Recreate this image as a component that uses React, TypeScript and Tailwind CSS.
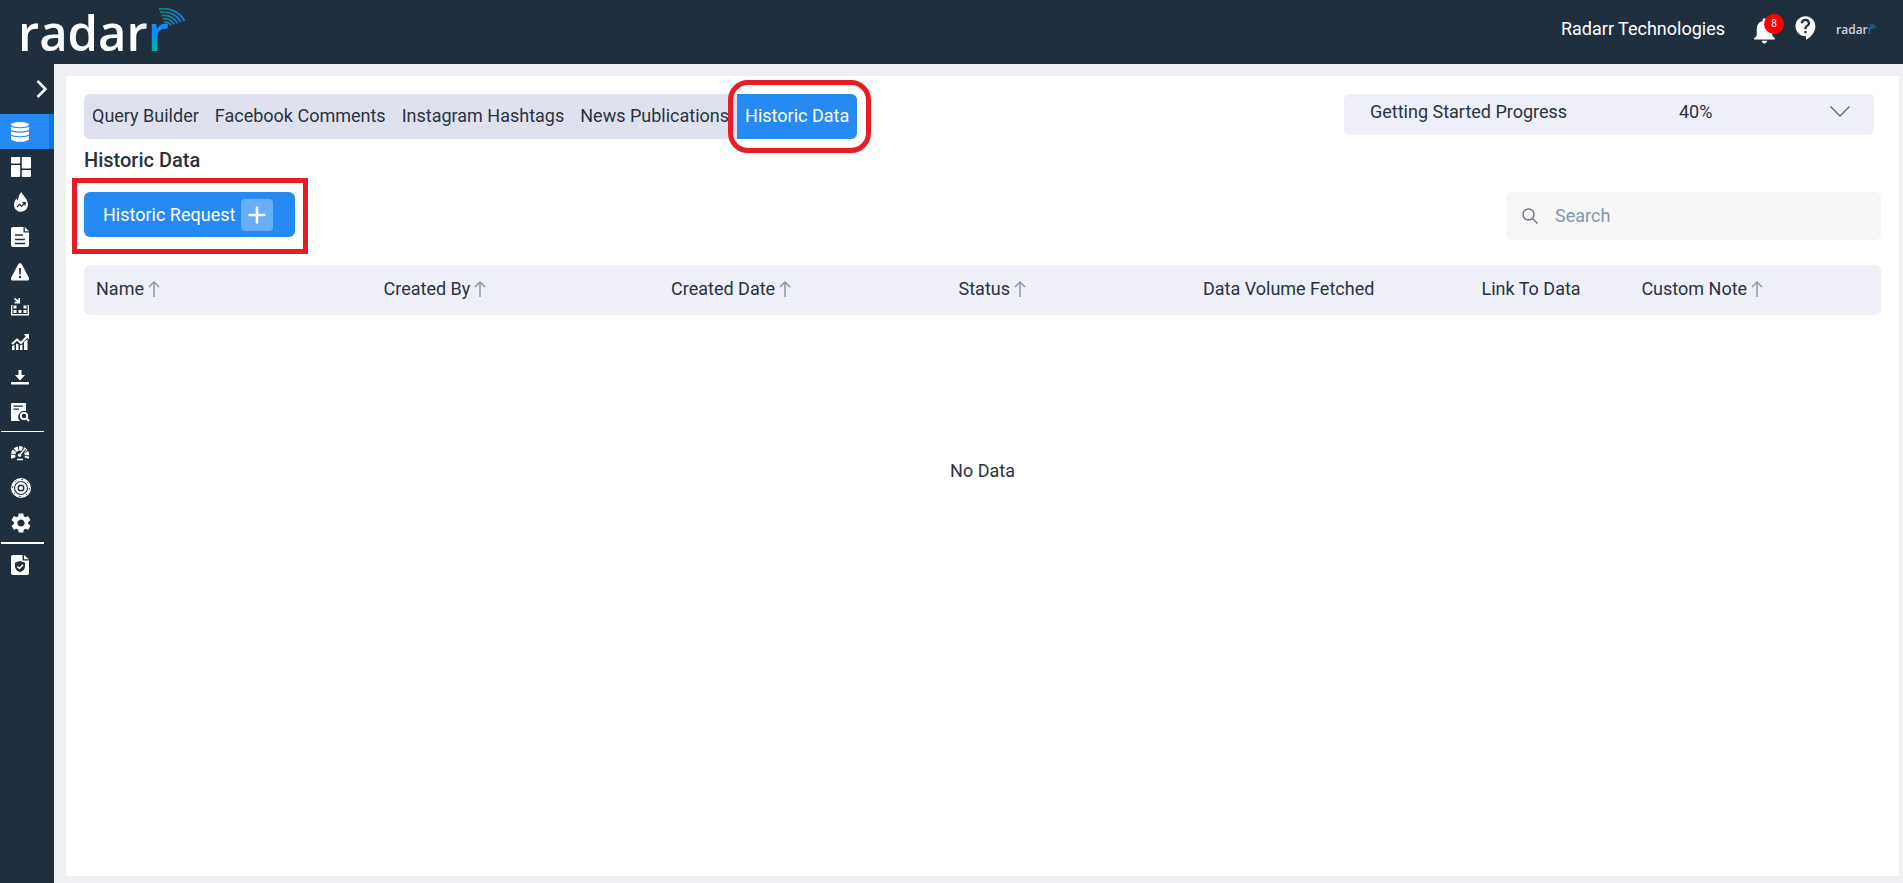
import { useId, useState } from "react";
import { MdContactSupport, MdNotifications, MdSettings } from "react-icons/md";

const tabs = [
    "Query Builder",
    "Facebook Comments",
    "Instagram Hashtags",
    "News Publications",
    "Historic Data",
];

const columns = [
    { title: "Name", sortable: true, width: "w-[16%]" },
    { title: "Created By", sortable: true, width: "w-[16%]" },
    { title: "Created Date", sortable: true, width: "w-[16%]" },
    { title: "Status", sortable: true, width: "w-[13.6%]" },
    { title: "Data Volume Fetched", sortable: false, width: "w-[15.5%]" },
    { title: "Link To Data", sortable: false, width: "w-[8.9%]" },
    { title: "Custom Note", sortable: true, width: "w-[14%]" },
];

function DatabaseIcon() {
    return (
        <svg width="20" height="20" viewBox="0 0 20 20" fill="currentColor">
            <ellipse cx="9" cy="2.6" rx="9" ry="2.6" />
            <path d="M0 4.400c2 2.300 16 2.300 18 0v3.200c-2 2.600-16 2.600-18 0z" />
            <path d="M0 9c2 2.300 16 2.300 18 0v3.200c-2 2.600-16 2.600-18 0z" />
            <path d="M0 13.600c2 2.300 16 2.300 18 0v3.600c-2 3.400-16 3.400-18 0z" />
        </svg>
    );
}

function DashboardIcon() {
    return (
        <svg width="20" height="20" viewBox="0 0 20 20" fill="currentColor">
            <rect x="0" y="0" width="9.2" height="6.6" rx="0.8" />
            <rect x="0" y="8" width="9.2" height="12" rx="0.8" />
            <rect x="10.8" y="0" width="9.2" height="11.6" rx="0.8" />
            <rect x="10.8" y="13" width="9.2" height="7" rx="0.8" />
        </svg>
    );
}

function TrendingIcon() {
    return (
        <svg width="20" height="20" viewBox="0 0 20 20" fill="none">
            <path d="M10.600 0c.6 3 6.400 6.800 6.400 12.600a7 7 0 0 1-14 .4c0-2.800 1.200-5 2.600-6.600.3 1.200.7 1.800 1.400 2C7.400 5 8.300 1.800 10.600 0z" fill="#fff" />
            <path d="M6 15l2.600-2.600 2 1.800 3.400-3.400M11.400 10.600h2.800v2.800" stroke="#202f3e" strokeWidth="1.3" />
        </svg>
    );
}

function DocumentIcon() {
    return (
        <svg width="20" height="20" viewBox="0 0 20 20" fill="none">
            <path d="M2 0h10.500v5.500H18V18a2 2 0 0 1-2 2H2a2 2 0 0 1-2-2V2a2 2 0 0 1 2-2z" fill="#fff" />
            <path d="M13.800 0L18 4.200h-4.200z" fill="#fff" />
            <path d="M4 8h8M4 12.500h10M4 16.500h10" stroke="#202f3e" strokeWidth="1.3" />
        </svg>
    );
}

function WarningIcon() {
    return (
        <svg width="20" height="20" viewBox="0 0 20 20" fill="none">
            <path d="M7.200 2.200a2.100 2.100 0 0 1 3.600 0l7 13.400a2 2 0 0 1-1.800 3H2a2 2 0 0 1-1.800-3z" fill="#fff" />
            <path d="M8 6h2l-.3 6.500H8.300z" fill="#202f3e" />
            <circle cx="9" cy="15" r="1.2" fill="#202f3e" />
        </svg>
    );
}

function CompetitorIcon() {
    return (
        <svg width="20" height="20" viewBox="0 0 20 20" fill="none">
            <path d="M3.500 1.500l4 3.500M8.200 1v4.600H3.600" stroke="#fff" strokeWidth="1.7" />
            <path d="M.7 8v9.800h16.600V8" stroke="#fff" strokeWidth="1.4" />
            <path d="M2.500 8.500h3v3h-3zM12.500 8.500h3v3h-3zM2.500 13h3v3h-3zM7.500 13h3v3h-3zM12.500 13h3v3h-3z" fill="#fff" />
        </svg>
    );
}

function GrowthIcon() {
    return (
        <svg width="20" height="20" viewBox="0 0 20 20" fill="none">
            <path d="M1 12l5-4.500 4 3.500 6.500-7" stroke="#fff" strokeWidth="2" />
            <path d="M12.500 2H18v5.500z" fill="#fff" />
            <path d="M1 14.500l2.500-2V18H1zM5 11.500l2.500 1V18H5zM9 13.500l2.500-1V18H9zM13 10l3.500-3v11H13z" fill="#fff" />
        </svg>
    );
}

function DownloadIcon() {
    return (
        <svg width="20" height="20" viewBox="0 0 20 20" fill="currentColor">
            <path d="M7.500 3h3v5H14l-5 5.500L4 8h3.500z" />
            <rect x="0" y="15" width="18" height="2.4" rx="0.6" />
        </svg>
    );
}

function ReportSearchIcon() {
    return (
        <svg width="20" height="20" viewBox="0 0 20 20" fill="none">
            <path d="M1 1h14v8a6 6 0 0 0-6 10H0V2a1 1 0 0 1 1-1z" fill="#fff" />
            <path d="M2.500 4.200H12M2.500 7.200H8" stroke="#202f3e" strokeWidth="1.3" />
            <circle cx="13" cy="14" r="3.2" stroke="#fff" strokeWidth="1.8" />
            <path d="M15.200 16.200l2.800 2.800" stroke="#fff" strokeWidth="2" />
        </svg>
    );
}

function GaugeIcon() {
    return (
        <svg width="20" height="20" viewBox="0 0 20 20" fill="none">
            <path d="M2.500 15a7 7 0 1 1 13 0" stroke="#fff" strokeWidth="4.5" strokeDasharray="3.3 0.9" />
            <path d="M8 13l6-7" stroke="#202f3e" strokeWidth="3" />
            <path d="M8.500 12.500l5.500-7" stroke="#fff" strokeWidth="1.3" />
            <circle cx="8.6" cy="12.2" r="1.7" fill="#fff" />
            <path d="M6 16.500h6" stroke="#fff" strokeWidth="1.5" />
        </svg>
    );
}

function TargetIcon() {
    return (
        <svg width="20" height="20" viewBox="0 0 20 20" fill="none" stroke="#fff">
            <circle cx="10" cy="10" r="8.5" strokeWidth="3" />
            <circle cx="10" cy="10" r="8.5" stroke="#202f3e" strokeWidth="1" strokeDasharray="1.6 5.07" />
            <circle cx="10" cy="10" r="4.7" strokeWidth="2.4" />
            <circle cx="10" cy="10" r="2" fill="#fff" stroke="none" />
        </svg>
    );
}

function PolicyIcon() {
    return (
        <svg width="20" height="20" viewBox="0 0 20 20" fill="none">
            <path d="M2 0h9.500v5.500H18V18a2 2 0 0 1-2 2H2a2 2 0 0 1-2-2V2a2 2 0 0 1 2-2z" fill="#fff" />
            <path d="M13 0l5 4.200h-5z" fill="#fff" />
            <path d="M9 6l5 1.800v3.700c0 2.600-2 4.700-5 5.800-3-1.100-5-3.200-5-5.800V7.800z" fill="#202f3e" />
            <path d="M6.400 11.500l2 2 3.600-3.800" stroke="#fff" strokeWidth="1.5" />
        </svg>
    );
}

const menuGroups = [
    {
        divider: "",
        items: [
            { label: "Data Sources", icon: <DatabaseIcon /> },
            { label: "Dashboards", icon: <DashboardIcon /> },
            { label: "Trending", icon: <TrendingIcon /> },
            { label: "Posts", icon: <DocumentIcon /> },
            { label: "Alerts", icon: <WarningIcon /> },
            { label: "Competitors", icon: <CompetitorIcon /> },
            { label: "Growth", icon: <GrowthIcon /> },
            { label: "Downloads", icon: <DownloadIcon /> },
            { label: "Reports", icon: <ReportSearchIcon /> },
        ],
    },
    {
        divider: "h-px",
        items: [
            { label: "Usage", icon: <GaugeIcon /> },
            { label: "Goals", icon: <TargetIcon /> },
            { label: "Settings", icon: <MdSettings size={24} className="-m-0.5" /> },
        ],
    },
    {
        divider: "h-0.5",
        items: [{ label: "Privacy", icon: <PolicyIcon /> }],
    },
];

function SortArrow() {
    return (
        <svg width="12" height="16" viewBox="0 0 12 16" fill="none" stroke="#9296a6" strokeWidth="1.5">
            <path d="M6 16V1.500M1 6l5-5 5 5" />
        </svg>
    );
}

function Signal({ className }: { className: string }) {
    const id = useId();

    return (
        <svg viewBox="0 0 28 20" className={className} fill="none" strokeWidth="1.8">
            <defs>
                <linearGradient id={id} x1="0" y1="0" x2="28" y2="10" gradientUnits="userSpaceOnUse">
                    <stop offset="0" stopColor="#17806f" />
                    <stop offset="1" stopColor="#1a7fe0" />
                </linearGradient>
            </defs>
            <g stroke={`url(#${id})`}>
                <path d="M1 1c11-1.500 21 3 25.500 12" />
                <path d="M2 4.200c9-1 17 2.500 21 10" />
                <path d="M3.200 7.400c7-.6 13 2 16.400 8" />
                <path d="M4.600 10.600c5-.4 9 1.600 11.600 5.800" />
                <path d="M6 13.800c3-.2 5.400 1 7 3.400" />
            </g>
        </svg>
    );
}

function Header() {
    return (
        <header className="flex h-16 shrink-0 items-center justify-between bg-[#202f3e] pl-[18px] pr-[30px] text-white">
            <a href="#" className="relative font-['Open_Sans',sans-serif] text-[49px] font-semibold leading-[56px]">
                radar
                <span className="bg-linear-to-b from-[#1389ff] from-50% to-[#0bb5a0] to-80% bg-clip-text text-transparent">r</span>
                <Signal className="absolute left-[140px] top-1 w-7" />
            </a>

            <div className="flex items-center pb-2">
                <span className="pt-0.5 text-lg">Radarr Technologies</span>
                <button className="relative ml-6 mt-1 cursor-pointer" aria-label="Notifications">
                    <MdNotifications size={31} />
                    <span className="absolute -right-1 -top-px flex size-5 items-center justify-center rounded-full bg-[#ff0000] text-[10px]">
                        8
                    </span>
                </button>
                <button className="ml-3 cursor-pointer" aria-label="Help">
                    <MdContactSupport size={28} />
                </button>
                <a href="#" className="relative ml-4 mt-1 font-['Open_Sans',sans-serif] text-xs font-semibold text-gray-300">
                    radar<span className="text-[#1377c0]">r</span>
                    <Signal className="absolute -right-1 top-0.5 w-2" />
                </a>
            </div>
        </header>
    );
}

function Sidebar() {
    return (
        <nav className="w-[54px] shrink-0 bg-[#202f3e] text-white">
            <button className="flex h-[50px] w-full cursor-pointer items-center justify-end pr-[7px]" aria-label="Expand menu">
                <svg width="11" height="18" viewBox="0 0 11 18" fill="none" stroke="currentColor" strokeWidth="2.6">
                    <path d="M1.500 1l8 8-8 8" />
                </svg>
            </button>
            {menuGroups.map((group, g) => (
                <div key={g}>
                    {group.divider && <div className={`mb-[3px] ml-px mr-[10px] mt-0.5 bg-white ${group.divider}`} />}
                    {group.items.map((item, i) => (
                        <a
                            key={item.label}
                            href="#"
                            aria-label={item.label}
                            className={`flex h-[35px] items-center pl-[11px] ${
                                g === 0 && i === 0 ? "border-r-[5px] border-[#0d74e2] bg-[#268af5]" : ""
                            }`}
                        >
                            {item.icon}
                        </a>
                    ))}
                </div>
            ))}
        </nav>
    );
}

export default function App() {
    const [activeTab, setActiveTab] = useState("Historic Data");
    const [search, setSearch] = useState("");

    return (
        <div className="flex min-h-screen flex-col font-['Roboto',sans-serif] text-[#2a3241]">
            <Header />
            <div className="flex flex-1">
                <Sidebar />
                <div className="flex flex-1 bg-[#eef0f4] pb-[7px] pl-3 pr-1 pt-3">
                    <main className="flex-1 bg-white px-[18px] pt-[18px]">
                        {/* Tabs and progress */}
                        <div className="flex items-start justify-between">
                            <div className="flex h-[45px] rounded-md bg-[#dfe2ee]">
                                {tabs.map((tab) => (
                                    <button
                                        key={tab}
                                        onClick={() => setActiveTab(tab)}
                                        className={`relative cursor-pointer px-2 pb-0.5 text-lg ${
                                            tab === activeTab ? "rounded-r-md bg-[#268af5] text-white" : ""
                                        }`}
                                    >
                                        {tab}
                                        {tab === "Historic Data" && (
                                            <span className="pointer-events-none absolute -bottom-3.5 -left-[9px] -right-3.5 -top-3.5 rounded-[20px] border-5 border-[#e71d25]" />
                                        )}
                                    </button>
                                ))}
                            </div>
                            <button className="mr-[7px] flex h-[41px] w-[530px] cursor-pointer items-center rounded-md bg-[#eeeff8] pb-1.5 pl-[26px] pr-6 text-left text-lg">
                                <span className="flex-[309]">Getting Started Progress</span>
                                <span className="flex-[151]">40%</span>
                                <svg width="20" height="11" viewBox="0 0 20 11" fill="none" stroke="#6b7280" strokeWidth="1.5">
                                    <path d="M.5.500l9.500 9.500L19.500.500" />
                                </svg>
                            </button>
                        </div>

                        <h1 className="mb-[11px] text-xl font-medium leading-[42px]">Historic Data</h1>

                        {/* Actions */}
                        <div className="flex items-start justify-between">
                            <button className="relative flex h-[45px] cursor-pointer items-center gap-1.5 rounded-md bg-[#268af5] pl-[19px] pr-[22px] text-lg text-white">
                                Historic Request
                                <span className="flex size-8 items-center justify-center rounded bg-white/30">
                                    <svg width="18" height="18" viewBox="0 0 18 18" stroke="currentColor" strokeWidth="2.6" strokeLinecap="round">
                                        <path d="M9 1.500v15M1.500 9h15" />
                                    </svg>
                                </span>
                                <span className="pointer-events-none absolute -bottom-[17px] -left-3 -right-[13px] -top-3.5 border-5 border-[#e71d25]" />
                            </button>
                            <label className="flex h-12 w-[375px] items-center gap-[17px] rounded-md bg-[#f7f7f7] pl-4">
                                <svg width="16" height="16" viewBox="0 0 16 16" fill="none" stroke="#6b7280" strokeWidth="1.4">
                                    <circle cx="6.5" cy="6.5" r="5.5" />
                                    <path d="M10.500 10.500l5 5" />
                                </svg>
                                <input
                                    type="text"
                                    aria-label="Search"
                                    placeholder="Search"
                                    value={search}
                                    onChange={(e) => setSearch(e.target.value)}
                                    className="min-w-0 flex-1 bg-transparent text-lg outline-none placeholder:text-[#8496ae]"
                                />
                            </label>
                        </div>

                        {/* Requests */}
                        <table className="mt-[25px] w-full table-fixed text-lg">
                            <thead>
                                <tr className="h-[50px] bg-[#eeeff7]">
                                    {columns.map((col) => (
                                        <th
                                            key={col.title}
                                            className={`whitespace-nowrap px-3 pb-0.5 text-left font-normal first:rounded-l-md last:rounded-r-md ${col.width}`}
                                        >
                                            <span className="flex items-center gap-1">
                                                {col.title}
                                                {col.sortable && <SortArrow />}
                                            </span>
                                        </th>
                                    ))}
                                </tr>
                            </thead>
                            <tbody>
                                <tr>
                                    <td colSpan={columns.length} className="h-[312px] text-center">
                                        No Data
                                    </td>
                                </tr>
                            </tbody>
                        </table>
                    </main>
                </div>
            </div>
        </div>
    );
}
